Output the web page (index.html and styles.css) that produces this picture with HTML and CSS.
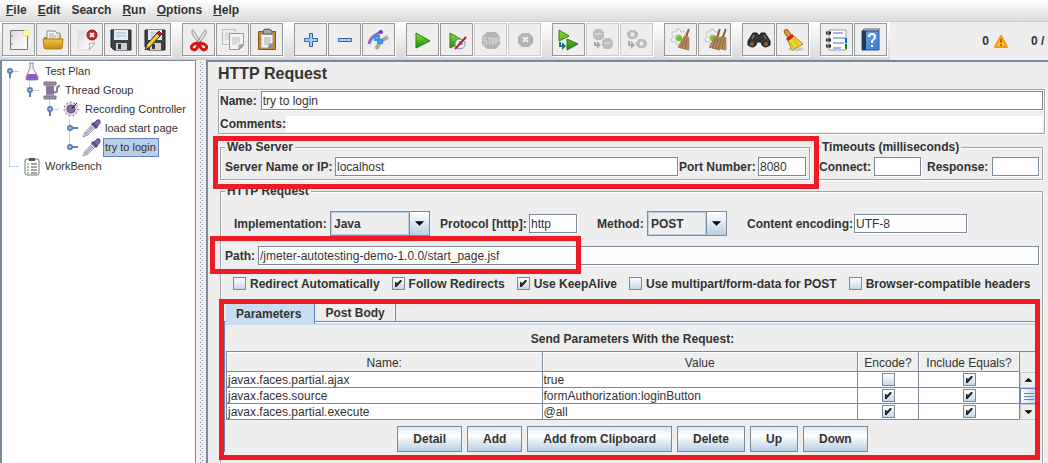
FILE: index.html
```html
<!DOCTYPE html>
<html lang="en">
<head>
<meta charset="utf-8">
<title>HTTP Request</title>
<link rel="stylesheet" href="styles.css">
</head>
<body>
<svg class="defs" aria-hidden="true">
  <defs>
    <linearGradient id="gGreen" x1="0" y1="0" x2="0" y2="1"><stop offset="0" stop-color="#8fe03c"/><stop offset="1" stop-color="#1f8a0c"/></linearGradient>
    <linearGradient id="gGold" x1="0" y1="0" x2="0" y2="1"><stop offset="0" stop-color="#f3c446"/><stop offset="1" stop-color="#c98a0c"/></linearGradient>
    <linearGradient id="gBlue" x1="0" y1="0" x2="1" y2="1"><stop offset="0" stop-color="#6da6ea"/><stop offset="1" stop-color="#3a79cc"/></linearGradient>
    <linearGradient id="gPaper" x1="0" y1="0" x2="1" y2="1"><stop offset="0" stop-color="#dcdcdc"/><stop offset="1" stop-color="#fff"/></linearGradient>
    <symbol id="floppy" viewBox="0 0 24 24">
      <path d="M2 2h20v20H5l-3-3z" fill="#3f4247" stroke="#222"/>
      <path d="M5 2h14v10H5z" fill="#e4ecf5"/><path d="M7 5h10M7 8h10" stroke="#9fb9d6"/>
      <path d="M7 15h11v7H7z" fill="#cfcfcf"/><path d="M9 16h3v5H9z" fill="#33363b"/>
    </symbol>
    <symbol id="gear" viewBox="0 0 24 24">
      <path d="M9 1h4l1 3 2 1 3-1 2 3-2 3v2l3 2-2 4-3-1-3 2v3h-4l-1-3-3-2-3 1-2-4 3-2v-3L2 7l2-3 3 1 2-1z" fill="#f4f4f4" stroke="#aaa"/>
      <circle cx="11" cy="12" r="5" fill="#d5d5d5"/><circle cx="12" cy="13" r="4" fill="#6cc82a"/>
    </symbol>
    <symbol id="broom" viewBox="0 0 14 24">
      <path d="M12 1 9 10" stroke="#8a5a30" stroke-width="2"/>
      <path d="m7 9 5 1v13L1 20z" fill="#b98a5c" stroke="#a0774c"/><path d="m8 11-4 10M10 11l-2 11" stroke="#8b633c"/>
    </symbol>
    <symbol id="expanded" viewBox="0 0 20 19">
      <path d="M8 9.500h9" stroke="#b8cfe5"/><path d="M8 11v5" stroke="#5b7fb8" stroke-width="2"/><circle cx="8" cy="9" r="2" fill="#dce8f5" stroke="#5b7fb8" stroke-width="2"/>
    </symbol>
    <symbol id="collapsed" viewBox="0 0 20 19">
      <path d="M10 9h6" stroke="#5b7fb8" stroke-width="2"/><circle cx="8" cy="9" r="2" fill="#dce8f5" stroke="#5b7fb8" stroke-width="2"/>
    </symbol>
    <symbol id="dropper" viewBox="0 0 20 19">
      <path d="M1 18 3 13 11 5l3 3-8 8z" fill="#eee" stroke="#999"/><path d="m3 16 8-8" stroke="#b79bd2" stroke-width="2"/>
      <path d="M10 4 15 9" stroke="#61418f" stroke-width="3"/><path d="m12 4 3-3q4-1 3 3l-3 4z" fill="#8462b5" stroke="#5e408c"/>
    </symbol>
  </defs>
</svg>

<nav class="menubar">
  <a href="#file"><u>F</u>ile</a><a href="#edit"><u>E</u>dit</a><a href="#search">Search</a><a href="#run"><u>R</u>un</a><a href="#options"><u>O</u>ptions</a><a href="#help"><u>H</u>elp</a>
</nav>

<header class="topbar">
  <div class="toolbar">
    <div class="group">
      <button aria-label="New"><svg viewBox="0 0 24 24"><path d="M3.500 2.500h17v19h-17z" fill="url(#gPaper)" stroke="#777"/><path d="M4 8h2M4 16h2" stroke="#888"/><circle cx="19" cy="5" r="3" fill="#fff9a8" stroke="#eee25a"/></svg></button>
      <button aria-label="Open"><svg viewBox="0 0 24 24"><path d="M3 9h3l1-2h13v5H3z" fill="#b97b09"/><path d="M6 3h8l3 3v8H6z" fill="#f5f5f5" stroke="#888"/><path d="M8 6h5M8 8h7M8 10h7" stroke="#aaa"/><path d="M15 5h4v6h-3" fill="#ddd" stroke="#999"/><path d="M2 11h20l-1 9q0 1-2 1H5q-2 0-2-2z" fill="url(#gGold)" stroke="#b07a10"/></svg></button>
      <button aria-label="Close"><svg viewBox="0 0 24 24"><path d="M3 3h16v14l-5 5H3z" fill="url(#gPaper)" stroke="#ddd"/><path d="M20 15q-4 0-6 1 2 2 0 6z" fill="#fff" stroke="#aaa"/><circle cx="17" cy="7" r="5" fill="#d0201a" stroke="#a00c0c"/><path d="m15 5 4 4m0-4-4 4" stroke="#fff" stroke-width="2"/></svg></button>
      <button aria-label="Save"><svg viewBox="0 0 24 24"><use href="#floppy"/></svg></button>
      <button aria-label="Save as"><svg viewBox="0 0 24 24"><use href="#floppy"/><path d="M2 22 4 16 14 5l3 3L7 19z" fill="#e8b923" stroke="#333"/><path d="m14 5 2-2 3 3-2 2z" fill="#c82020" stroke="#7a1515"/><path d="m5 18 10-11" stroke="#ffe680"/></svg></button>
    </div>
    <div class="group">
      <button aria-label="Cut"><svg viewBox="0 0 24 24"><path d="M5 2h1l8 12-2 2L5 6zM19 2h-1l-8 12 2 2 7-10z" fill="#e2e2e2" stroke="#999"/><path d="M11 15l-4 1q-4 2-2 5 3 2 5-1l2-4 2 4q2 3 5 1 2-3-2-5l-4-1" fill="none" stroke="#d41818" stroke-width="3"/></svg></button>
      <button aria-label="Copy"><svg viewBox="0 0 24 24"><path d="M1.500 1.500h13v15h-13z" fill="#eee" stroke="#bbb"/><path d="M4 5h8M4 7h8M4 9h8M4 11h5" stroke="#ccc"/><path d="M8.500 5.500h14v12l-4 4h-10z" fill="#f4f4f4" stroke="#999"/><path d="M11 10h8M11 12h8M11 14h8M11 16h5" stroke="#bbb"/><path d="M22 17h-4v4z" fill="#ccc" stroke="#888"/></svg></button>
      <button aria-label="Paste"><svg viewBox="0 0 24 24"><path d="M3.500 3.500h17v18h-17z" fill="#c98a2b" stroke="#84540f"/><path d="M6 6h12v11l-3 3H6z" fill="#f4f4f4" stroke="#999"/><path d="M9 10h7M9 12h7M9 14h6M9 16h4" stroke="#aaa"/><path d="M8 3q0-2 4-2t5 2v3H8z" fill="#a6aaa4" stroke="#555"/><path d="M18 16h-4v4z" fill="#bbb" stroke="#777"/></svg></button>
    </div>
    <div class="group">
      <button aria-label="Expand all"><svg viewBox="0 0 24 24"><path d="M10.500 5.500h3v5h5v3h-5v5h-3v-5h-5v-3h5z" fill="#a8cbef" stroke="#3568a8"/></svg></button>
      <button aria-label="Collapse all"><svg viewBox="0 0 24 24"><path d="M5.500 10.500h13v3h-13z" fill="#a8cbef" stroke="#3568a8"/></svg></button>
      <button aria-label="Toggle"><svg viewBox="0 0 24 24"><path d="m9 21 5-8 7-4" fill="none" stroke="#aaa" stroke-width="4"/><path d="M2 16q1-5 5-8l8-5" fill="none" stroke="#8d68c8" stroke-width="3"/><circle cx="14" cy="4" r="2" fill="#6f3fbe"/><path d="M8 8h4v4h3v3h-4v-3H8z" fill="#5bb8f5" stroke="#2d95e4" stroke-width="2"/></svg></button>
    </div>
    <div class="group">
      <button aria-label="Start"><svg viewBox="0 0 24 24"><path d="M5 5v15l14-7z" fill="url(#gGreen)" stroke="#2f7d13"/></svg></button>
      <button aria-label="Start no pauses"><svg viewBox="0 0 24 24"><path d="M5 5v15l14-7z" fill="url(#gGreen)" stroke="#2f7d13"/><circle cx="15" cy="16" r="5" fill="#edf5ff" stroke="#6b91bd"/><path d="M15 13v3h3" fill="none" stroke="#345"/><path d="M10 21 21 9" stroke="#c91616" stroke-width="2"/></svg></button>
      <button aria-label="Stop" disabled><svg viewBox="0 0 24 24"><path d="M8 4h9l4 5v7l-4 5H8l-5-5V9z" fill="#b3b3b3"/><path d="M8 10H5v3h3v3H5M9 10h3M10.500 10v6M14 10h-1v6h2v-6zM17 16v-6h3v3h-3" fill="none" stroke="#ddd"/></svg></button>
      <button aria-label="Shutdown" disabled><svg viewBox="0 0 24 24"><path d="M9 5h7l4 4v6l-4 4H9l-4-4V9z" fill="#b3b3b3"/><path d="m10 9 5 5m0-5-5 5" stroke="#eee" stroke-width="2"/></svg></button>
    </div>
    <div class="group">
      <button aria-label="Remote start"><svg viewBox="0 0 24 24"><path d="M2 2v11l10-5zM10 11v11l11-6z" fill="url(#gGreen)" stroke="#2f7d13"/><path d="M3 14v4h3" stroke="#247485" stroke-width="2"/><path d="m5 14 4 4-4 4z" fill="#247485"/></svg></button>
      <button aria-label="Remote stop" disabled><svg viewBox="0 0 24 24"><path d="M5 1h5l3 3v5l-3 3H5L2 9V4zM14 10h5l3 3v5l-3 3h-5l-3-3v-5z" fill="#bbb"/><path d="M4 6h7M13 15h7" stroke="#d2d2d2" stroke-width="2"/><path d="M4 14v3h3" stroke="#aaa" stroke-width="2"/><path d="m6 13 4 4-4 4z" fill="#aaa"/></svg></button>
      <button aria-label="Remote shutdown" disabled><svg viewBox="0 0 24 24"><path d="M5 2h5l3 3v3l-3 3H5L2 8V5zM14 11h5l3 3v3l-3 3h-5l-3-3v-3z" fill="#bbb"/><path d="m6 5 3 3m0-3L6 8m9 6 3 3m0-3-3 3" stroke="#eee" stroke-width="2"/><path d="M4 13v4h3" stroke="#aaa" stroke-width="2"/><path d="m6 13 4 4-4 4z" fill="#aaa"/></svg></button>
    </div>
    <div class="group">
      <button aria-label="Clear"><svg viewBox="0 0 24 24"><use href="#gear" x="1" y="0" width="18" height="19"/><use href="#broom" x="8" y="0" width="14" height="23"/></svg></button>
      <button aria-label="Clear all"><svg viewBox="0 0 24 24"><use href="#gear" x="1" y="0" width="18" height="19"/><use href="#broom" x="5" y="0" width="14" height="23"/><use href="#broom" x="11" y="0" width="14" height="23"/></svg></button>
    </div>
    <div class="group">
      <button aria-label="Find"><svg viewBox="0 0 24 24"><path d="M6 5h4l2 3 2-3h4l5 8v4q-5 4-8 0l-1-3h-4l-1 3q-3 4-8 0v-4z" fill="#343434" stroke="#161616"/><path d="m7 7-2 4M17 7l2 4" stroke="#999"/><circle cx="5" cy="16" r="2" fill="#9c5430"/><circle cx="19" cy="16" r="2" fill="#9c5430"/></svg></button>
      <button aria-label="Reset search"><svg viewBox="0 0 24 24"><ellipse cx="15" cy="21" rx="8" ry="2" fill="#c9c9c9"/><path d="M3 3q1-3 4-1l4 6-3 3-4-5z" fill="#d89a3a" stroke="#946014"/><path d="m7 13 6-5 9 8-11 6z" fill="#f5d938" stroke="#a98d10"/><path d="m9 14 4 6m-1-8 5 6m-4-8 5 6" stroke="#c9a71c"/><path d="m6 12 6-5" stroke="#cf1f1f" stroke-width="3"/></svg></button>
    </div>
    <div class="group">
      <button aria-label="Function helper"><svg viewBox="0 0 24 24"><path d="M4 2h17v20H4z" fill="#fff" stroke="#999"/><path d="M1 5h5M1 12h5M1 18h5" stroke="#222" stroke-width="3"/><path d="M2 5h2M2 12h2M2 18h2" stroke="#bbb"/><path d="M8 5h10M8 10h12M8 15h11M8 20h8" stroke="#3e6fc6"/><path d="M20 10h2v5h-2z" fill="#1463d2"/><path d="M20 16h2v5h-2z" fill="#118311"/></svg></button>
      <button aria-label="Help"><svg viewBox="0 0 24 24"><path d="M3 3 5 1h16l-2 2z" fill="#ddd" stroke="#567"/><path d="M3 3h17v19H3z" fill="url(#gBlue)" stroke="#2558a0"/><path d="M3 3h4v19H3z" fill="#24364f"/><path d="M10 9q0-3 3-3t3 3q0 2-3 4v2" fill="none" stroke="#fff" stroke-width="2"/><path d="M12 17h2v2h-2z" fill="#fff"/></svg></button>
    </div>
  </div>
  <div class="status">
    <span>0</span>
    <svg class="warn" viewBox="0 0 16 16"><path d="M8 3 14 14H2z" fill="#fdd018" stroke="#f5980c" stroke-width="2" stroke-linejoin="round"/><path d="M8 6v4M8 11v2" stroke="#b8601a" stroke-width="2"/></svg>
    <span class="threads">0 /</span>
  </div>
</header>

<main class="workspace">
  <aside class="tree">
    <div class="node"><svg class="cell"><use href="#expanded"/><path class="line" d="M7.500 16v3"/></svg><svg class="icon" viewBox="0 0 20 19"><path d="M7 1h5M8 1v5L4 15q-1 3 2 3h8q3 0 2-3L11 6V1" fill="#f4f4f8" stroke="#8b8796"/><path d="M6 12h8l2 4q0 2-2 2H6q-2 0-2-2z" fill="#8a5fc0"/></svg><a href="#plan">Test Plan</a></div>
    <div class="node"><svg class="cell"><path class="line" d="M7.500 0v19"/></svg><svg class="cell"><path class="line" d="M7.500 0v7"/><use href="#expanded"/></svg><svg class="icon" viewBox="0 0 20 19"><path d="M2 1h12v3H2zM2 15h12v3H2z" fill="#9a8ba3" stroke="#7d7186"/><path d="M4 4h8v11H4z" fill="#a98fb9"/><path d="M4 6h8M4 8h8M4 10h8M4 12h8" stroke="#71557f"/><path d="M12 11q4 1 3-3 0-3 3-3" fill="none" stroke="#84778c" stroke-width="2"/></svg><a href="#group">Thread Group</a></div>
    <div class="node"><svg class="cell"><path class="line" d="M7.500 0v19"/></svg><svg class="cell"></svg><svg class="cell"><path class="line" d="M7.500 0v7"/><use href="#expanded"/></svg><svg class="icon" viewBox="0 0 20 19"><circle cx="9" cy="9" r="7" fill="#ddd5e6" stroke="#222" stroke-dasharray="1 3"/><circle cx="9" cy="9" r="4" fill="#8465a4" stroke="#65547a"/><path d="m10 8 5-5" stroke="#111"/></svg><a href="#recording">Recording Controller</a></div>
    <div class="node"><svg class="cell"><path class="line" d="M7.500 0v19"/></svg><svg class="cell"></svg><svg class="cell"></svg><svg class="cell"><path class="line" d="M7.500 0v19"/><use href="#collapsed"/></svg><svg class="icon"><use href="#dropper"/></svg><a href="#load">load start page</a></div>
    <div class="node"><svg class="cell"><path class="line" d="M7.500 0v19"/></svg><svg class="cell"></svg><svg class="cell"></svg><svg class="cell"><path class="line" d="M7.500 0v10"/><use href="#collapsed"/></svg><svg class="icon"><use href="#dropper"/></svg><a class="selected" href="#login">try to login</a></div>
    <div class="node"><svg class="cell"><path class="line" d="M7.500 0v9.500H17"/></svg><svg class="icon" viewBox="0 0 20 19"><rect x="3" y="2" width="14" height="16" rx="2" fill="#fff" stroke="#777"/><path d="M7 1h6v3H7z" fill="#555"/><path d="M9 7h6M9 10h6M9 13h6M9 16h6" stroke="#444"/><path d="M5 7h2M5 10h2M5 13h2M5 16h2" stroke="#3b8a3b"/></svg><a href="#bench">WorkBench</a></div>
  </aside>
  <div class="splitter"></div>

  <section class="editor">
    <h1>HTTP Request</h1>
    <div class="naming">
      <div class="field"><label for="name">Name:</label><input id="name" type="text" value="try to login"></div>
      <div class="field"><label for="comments">Comments:</label><input id="comments" class="plain" type="text"></div>
    </div>

    <div class="servers">
      <div class="marked server">
        <fieldset>
          <legend>Web Server</legend>
          <div class="server-row">
            <label for="host">Server Name or IP:</label><input id="host" type="text" value="localhost">
            <label for="port">Port Number:</label><input id="port" type="text" value="8080">
          </div>
        </fieldset>
        <span class="mark"></span>
      </div>
      <fieldset class="timeouts">
        <legend>Timeouts (milliseconds)</legend>
        <div class="timeout-row">
          <label for="connect">Connect:</label><input id="connect" type="text">
          <label for="response">Response:</label><input id="response" type="text">
        </div>
      </fieldset>
    </div>

    <fieldset class="request">
      <legend>HTTP Request</legend>
      <div class="options">
        <label for="impl">Implementation:</label>
        <span class="combo"><select id="impl"><option>Java</option></select><svg viewBox="0 0 20 25"><path d="M5 10h10l-5 5z"/></svg></span>
        <label for="protocol">Protocol [http]:</label><input id="protocol" type="text" value="http">
        <label for="method">Method:</label>
        <span class="combo"><select id="method"><option>POST</option></select><svg viewBox="0 0 20 25"><path d="M5 10h10l-5 5z"/></svg></span>
        <label for="encoding">Content encoding:</label><input id="encoding" type="text" value="UTF-8">
      </div>
      <div class="marked path">
        <label for="path">Path:</label><input id="path" type="text" value="/jmeter-autotesting-demo-1.0.0/start_page.jsf">
        <span class="mark"></span>
      </div>
      <div class="checks">
        <label><input type="checkbox">Redirect Automatically</label>
        <label><input type="checkbox" checked>Follow Redirects</label>
        <label><input type="checkbox" checked>Use KeepAlive</label>
        <label><input type="checkbox">Use multipart/form-data for POST</label>
        <label><input type="checkbox">Browser-compatible headers</label>
      </div>
      <div class="marked params">
        <div class="tabs"><button class="tab active">Parameters</button><button class="tab">Post Body</button></div>
        <div class="pane">
          <h2>Send Parameters With the Request:</h2>
          <div class="grid">
            <table>
              <colgroup><col><col><col class="col-encode"><col class="col-equals"></colgroup>
              <thead><tr><th>Name:</th><th>Value</th><th>Encode?</th><th>Include Equals?</th></tr></thead>
              <tbody>
                <tr><td>javax.faces.partial.ajax</td><td>true</td><td><input type="checkbox" aria-label="Encode"></td><td><input type="checkbox" aria-label="Include equals" checked></td></tr>
                <tr><td>javax.faces.source</td><td>formAuthorization:loginButton</td><td><input type="checkbox" aria-label="Encode" checked></td><td><input type="checkbox" aria-label="Include equals" checked></td></tr>
                <tr><td>javax.faces.partial.execute</td><td>@all</td><td><input type="checkbox" aria-label="Encode" checked></td><td><input type="checkbox" aria-label="Include equals" checked></td></tr>
              </tbody>
            </table>
            <div class="scroll">
              <button aria-label="Scroll up"><svg viewBox="0 0 15 16"><path d="M3 10h9L8 6H7z"/></svg></button>
              <div class="thumb"></div>
              <button aria-label="Scroll down"><svg viewBox="0 0 15 16"><path d="M3 6h9l-4 4H7z"/></svg></button>
            </div>
          </div>
          <div class="actions"><button>Detail</button><button>Add</button><button>Add from Clipboard</button><button>Delete</button><button>Up</button><button>Down</button></div>
        </div>
        <span class="mark"></span>
      </div>
    </fieldset>
  </section>
</main>
</body>
</html>
```
FILE: styles.css
```css
* { box-sizing: border-box; }

:root {
  --slate: #7a8a99;
  --edge: #a3a3a3;
  --face: #eee;
  --blue: #6382bf;
  --red: #ed1c24;
}

body {
  margin: 0;
  height: 100vh;
  display: flex;
  flex-direction: column;
  overflow: hidden;
  background: var(--face);
  color: #333;
  font: bold 12px/14px "Liberation Sans", Arial, sans-serif;
}

.defs { position: absolute; width: 0; height: 0; }
a { color: inherit; text-decoration: none; }
svg { display: block; }
button, input, select { font: inherit; color: inherit; margin: 0; }
button { padding: 0; }

/* Menu and toolbar */
.menubar {
  display: flex;
  gap: 11px;
  padding: 3px 6px 4px;
  border-bottom: 1px solid #ccc;
  background: linear-gradient(#fff, #dadada);
}

.topbar {
  display: flex;
  height: 38px;
}
.toolbar {
  display: flex;
  gap: 11px;
  padding: 1px 3px 3px 2px;
  border-bottom: 1px solid #ccc;
  background: linear-gradient(#fff, #dadada);
}
.group { display: flex; gap: 1px; }
.group button {
  width: 33px;
  height: 33px;
  border: 1px solid #999;
  background: var(--face);
  display: grid;
  place-items: center;
  box-shadow: 1px 1px #fff;
}
.group button:disabled { border-color: #ccc; }
.group svg { width: 24px; height: 24px; fill: none; }

.status {
  flex: 1;
  display: flex;
  align-items: center;
  justify-content: flex-end;
}
.warn { width: 16px; height: 16px; margin: 0 22px 0 4px; }
.threads { width: 17px; white-space: nowrap; }

/* Workspace */
.workspace {
  flex: 1;
  min-height: 0;
  display: flex;
}

.tree {
  width: 196px;
  border: solid var(--slate);
  border-width: 1px 1px 0 2px;
  background: #fff;
  font-weight: normal;
  font-size: 11px;
  padding-top: 1px;
}
.node { display: flex; align-items: center; height: 19px; white-space: nowrap; }
.cell, .icon { width: 20px; height: 19px; flex: none; overflow: visible; }
.line { fill: none; stroke: #b8cfe5; }
.node a { padding: 1px 2px 1px 1px; border: 1px solid transparent; line-height: 15px; }
.icon { margin-right: 1px; }
.node .selected { background: #b8cfe5; border-color: var(--blue); }

.splitter {
  width: 10px;
  background:
    conic-gradient(at 1px 1px, transparent 75%, #888 0) 1px 0 / 4px 4px content-box,
    conic-gradient(at 1px 1px, transparent 75%, #888 0) 3px 2px / 4px 4px content-box;
  padding: 2px 2px 0 3px;
}

.editor {
  flex: 1;
  min-width: 0;
  border: solid var(--slate);
  border-width: 2px 0 0 2px;
  padding: 0 3px 0 10px;
  overflow: hidden;
}
h1 { margin: 0 0 3px; font-size: 16px; line-height: 24px; }

label { white-space: nowrap; }
input[type="text"] {
  min-width: 0;
  width: 100%;
  height: 19px;
  padding: 0 1px;
  border: 1px solid var(--slate);
  border-radius: 0;
  background: #fff;
  box-shadow: 1px 1px #fff;
  font-weight: normal;
}

.naming {
  border: 1px solid var(--edge);
  box-shadow: inset 1px 1px #fff, 1px 1px #fff;
  padding: 1px 1px 1px 1px;
  display: grid;
  gap: 6px;
}
.field { display: flex; align-items: center; }
#name { margin-left: 4px; }
input.plain[type="text"] { border: 0; height: 16px; box-shadow: none; }

fieldset {
  min-width: 0;
  margin: 0;
  padding: 3px;
  border: 1px solid var(--edge);
  box-shadow: inset 1px 1px #fff, 1px 1px #fff;
}
legend { margin-left: 1px; padding: 0 2px; background: var(--face); }

/* Highlight frames lie over the form */
.marked { position: relative; }
.mark {
  position: absolute;
  z-index: 1;
  border: 5px solid var(--red);
  pointer-events: none;
}

.servers {
  display: flex;
  gap: 8px;
  margin: 6px 2px 4px;
}
.server { flex: 1; }
.server .mark { inset: -4px -9px -9px -7px; }
.server-row, .timeout-row, .options { display: grid; align-items: center; }
.server-row { grid-template-columns: 110px 1fr 80px 48px; padding-left: 1px; }
.server-row label + input + label { padding-left: 1px; }
.timeouts { width: 225px; padding-left: 0; }
.timeout-row { grid-template-columns: 55px 47px 71px 47px; }
.timeout-row input + label { padding-left: 6px; }

.request {
  margin: 0 2px;
  padding: 13px 3px 20px;
}
.options {
  grid-template-columns: 96px 100px 99px 48px 70px 80px 127px 113px;
  padding-left: 10px;
}
.options .combo + label { padding-left: 10px; }
.options #protocol + label, .options .combo:nth-of-type(2) + label { padding-left: 20px; }
.combo {
  display: flex;
  height: 25px;
  border: 1px solid var(--slate);
}
.combo select {
  appearance: none;
  flex: 1;
  min-width: 0;
  padding: 0 2px;
  border: 1px solid #b8cfe5;
  border-radius: 0;
  background: var(--face);
}
.combo svg {
  width: 20px;
  border-left: 1px solid var(--slate);
  background: linear-gradient(#fff, #b8cfe5);
}

.path {
  display: grid;
  grid-template-columns: 33px 1fr;
  align-items: center;
  margin: 10px 0 11px;
  padding-left: 1px;
}
.path .mark { top: -10px; left: -14px; width: 371px; height: 38px; }

.checks { display: flex; gap: 12px; padding-left: 9px; height: 15px; margin-bottom: 13px; }
.checks label { display: flex; align-items: center; gap: 4px; }
input[type="checkbox"] {
  appearance: none;
  flex: none;
  width: 13px;
  height: 13px;
  border: 1px solid var(--slate);
  background: linear-gradient(#fff, #c2d6ea);
}
input[type="checkbox"]:checked::before {
  content: "";
  display: block;
  width: 7px;
  height: 7px;
  margin: 2px;
  background: #222;
  clip-path: polygon(0 30%, 28% 30%, 28% 55%, 80% 0, 100% 0, 100% 20%, 28% 100%, 0 100%);
}

.params .mark { inset: -5px -1px -8px -5px; }
.tabs { display: flex; padding-left: 2px; border-bottom: 1px solid var(--blue); height: 18px; }
.tab {
  border: 0;
  border-right: 1px solid var(--slate);
  background: var(--face);
  padding: 0 10px;
}
.active { padding-right: 13px; height: 20px; border-color: var(--blue); background: #c8ddf2; }
.pane { border-left: 1px solid var(--blue); padding-left: 1px; box-shadow: inset 0 1px #fff, inset 0 3px #c8ddf2; }
h2 { margin: 0; padding: 10px 0 5px; font-size: 12px; line-height: 14px; text-align: center; }

.grid { display: flex; border-top: 1px solid var(--slate); }
table { flex: 1; width: 0; table-layout: fixed; border-collapse: separate; border-spacing: 0; font-weight: normal; border-left: 1px solid var(--slate); }
.col-encode { width: 61px; }
.col-equals { width: 101px; }
th, td { padding: 0; border: solid var(--slate); border-width: 0 1px 1px 0; }
th { height: 20px; padding-top: 2px; font-weight: normal; box-shadow: inset 1px 1px #fff; }
td { height: 16px; padding: 1px 0 0 1px; line-height: 14px; background: #fff; }
td:nth-child(n+3) { text-align: center; line-height: 0; padding: 0; }
td input { vertical-align: middle; }
.scroll { width: 19px; padding-top: 20px; }
.scroll button { display: block; width: 19px; height: 16px; border: 1px solid #ccc; background: var(--face); }
.scroll button svg { width: 15px; height: 14px; }
.thumb {
  height: 16px;
  border: 1px solid var(--blue);
  background: repeating-linear-gradient(var(--blue) 0 1px, transparent 1px 3px) 3px 4px / 10px 7px no-repeat, linear-gradient(90deg, #fff, #b8cfe5);
}

.actions { display: flex; justify-content: center; gap: 5px; padding: 6px 0 0; }
.actions button {
  height: 26px;
  padding: 0 15px;
  border: 1px solid var(--slate);
  background: linear-gradient(#dde8f3, #fff 35%, #b8cfe5);
}
```
